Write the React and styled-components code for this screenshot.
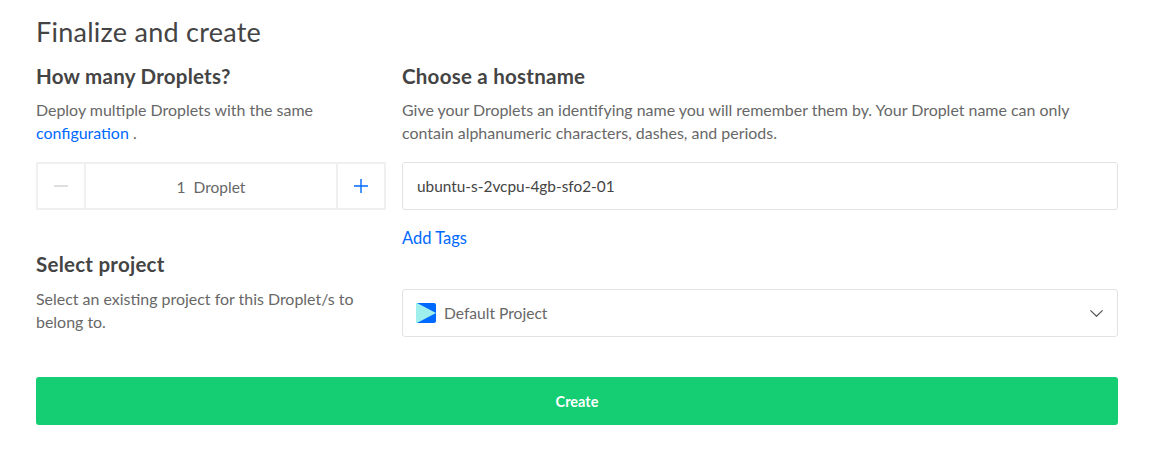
import React from 'react';
import styled, { createGlobalStyle } from 'styled-components';

const GlobalStyle = createGlobalStyle`
  html, body {
    margin: 0;
    background: #fff;
    font-family: "Lato", "Open Sans", sans-serif;
  }
`;

const App = () => {
  return (
    <>
      <GlobalStyle />
      <Page>
        <Title>Finalize and create</Title>
        <Columns>
          <Section>
            <Heading>How many Droplets?</Heading>
            <Help>
              Deploy multiple Droplets with the same
              <br />
              <TextLink>configuration</TextLink> .
            </Help>
            <Stepper>
              <StepButton $muted>
                <svg width="14" height="14" viewBox="0 0 14 14">
                  <path d="M0 7h14" stroke="#d3d3d3" strokeWidth="1.5" />
                </svg>
              </StepButton>
              <StepValue>
                <span>1</span>
                <span>Droplet</span>
              </StepValue>
              <StepButton>
                <svg width="14" height="14" viewBox="0 0 14 14">
                  <path d="M0 7h14M7 0v14" stroke="#0069ff" strokeWidth="1.4" />
                </svg>
              </StepButton>
            </Stepper>
          </Section>
          <Section>
            <Heading>Choose a hostname</Heading>
            <Help>
              Give your Droplets an identifying name you will remember them by. Your Droplet name can only
              <br />
              contain alphanumeric characters, dashes, and periods.
            </Help>
            <HostInput defaultValue="ubuntu-s-2vcpu-4gb-sfo2-01" />
            <TagsLink>Add Tags</TagsLink>
          </Section>
          <ProjectSection>
            <Heading>Select project</Heading>
            <Help>
              Select an existing project for this Droplet/s to
              <br />
              belong to.
            </Help>
          </ProjectSection>
          <ProjectSelect>
            <ProjectName>
              <svg width="20" height="20" viewBox="0 0 20 20">
                <rect width="20" height="20" rx="2" fill="#0069ff" />
                <path d="M0 0h1L20 10 1 20H0z" fill="#9ff0ec" />
              </svg>
              Default Project
            </ProjectName>
            <svg width="13" height="7" viewBox="0 0 13 7">
              <path d="M.4.4 6.5 6.3 12.6.4" fill="none" stroke="#555" strokeWidth="1.2" />
            </svg>
          </ProjectSelect>
        </Columns>
        <CreateButton>Create</CreateButton>
      </Page>
    </>
  );
};

export default App;

const Page = styled.div`
  width: 1082px;
  height: 453px;
  box-sizing: border-box;
  margin-left: 36px;
  padding-top: 15px;
  color: #676767;
`;

const Title = styled.h1`
  margin: 0;
  font-size: 27px;
  line-height: 33px;
  font-weight: 400;
  letter-spacing: 0.26px;
  color: #444;
`;

const Columns = styled.div`
  display: grid;
  grid-template-columns: 350px 716px;
  column-gap: 16px;
  margin-top: 15px;
`;

const Section = styled.div`
  display: flex;
  flex-direction: column;
  align-items: flex-start;
`;

const Heading = styled.h2`
  margin: 0 0 9px;
  font-size: 20.5px;
  line-height: 26px;
  font-weight: 700;
  letter-spacing: 0.25px;
  color: #444;
`;

const ProjectSection = styled(Section)`
  margin-top: 3px;

  ${Heading} {
    margin-bottom: 10px;
  }
`;

const Help = styled.p`
  margin: 0;
  font-size: 15.95px;
  line-height: 23px;
  color: #676767;
`;

const TextLink = styled.a`
  color: #0069ff;
  cursor: pointer;
`;

const TagsLink = styled(TextLink)`
  font-size: 16.5px;
  line-height: 20px;
  margin-top: 18px;
`;

const Stepper = styled.div`
  display: flex;
  width: 100%;
  height: 48px;
  box-sizing: border-box;
  margin-top: 18px;
  border: 2px solid #f0f0f0;
`;

const StepButton = styled.button`
  display: flex;
  align-items: center;
  justify-content: center;
  width: 46px;
  padding: 0;
  border: 0;
  background: #fff;
  cursor: ${(props) => (props.$muted ? 'default' : 'pointer')};
`;

const StepValue = styled.div`
  flex: 1;
  display: flex;
  align-items: center;
  justify-content: center;
  gap: 8px;
  padding-top: 2px;
  border-left: 2px solid #f0f0f0;
  border-right: 2px solid #f0f0f0;
  font-size: 15.5px;
  color: #676767;
`;

const HostInput = styled.input`
  width: 100%;
  height: 48px;
  box-sizing: border-box;
  margin-top: 18px;
  padding: 0 14px;
  border: 1px solid #e2e2e2;
  border-radius: 3px;
  outline: none;
  font: inherit;
  font-size: 15.4px;
  color: #444;
`;

const ProjectSelect = styled.div`
  display: flex;
  align-items: center;
  justify-content: space-between;
  height: 48px;
  box-sizing: border-box;
  margin-top: 41px;
  padding: 0 14px 0 13px;
  border: 1px solid #e2e2e2;
  border-radius: 3px;
  cursor: pointer;
`;

const ProjectName = styled.div`
  display: flex;
  align-items: center;
  gap: 8px;
  font-size: 15.6px;
  color: #676767;
`;

const CreateButton = styled.button`
  display: block;
  width: 100%;
  height: 48px;
  margin-top: 40px;
  border: 0;
  border-radius: 3px;
  background: #15cd72;
  color: #fff;
  font: inherit;
  font-size: 14.5px;
  font-weight: 700;
  cursor: pointer;
`;
